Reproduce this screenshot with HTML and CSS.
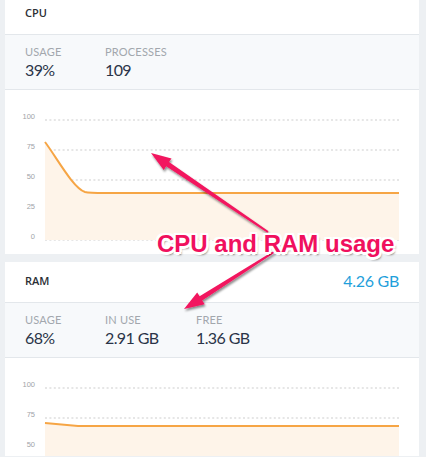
FILE: index.html
```html
<!DOCTYPE html>
<html>
<head>
<meta charset="utf-8">
<link rel="stylesheet" href="styles.css">
</head>
<body>
<div class="page">
  <section class="card card-first">
    <header class="card-head"><span class="card-title">CPU</span></header>
    <div class="stats">
      <div class="stat"><div class="stat-label">Usage</div><div class="stat-value">39%</div></div>
      <div class="stat"><div class="stat-label">Processes</div><div class="stat-value">109</div></div>
    </div>
    <div class="chart">
      <svg class="chart-svg" width="414" height="164" viewBox="0 0 414 164">
        <g class="grid">
          <line x1="40" y1="30" x2="394" y2="30"/>
          <line x1="40" y1="60" x2="394" y2="60"/>
          <line x1="40" y1="90" x2="394" y2="90"/>
          <line x1="40" y1="120" x2="394" y2="120"/>
          <line x1="40" y1="150" x2="394" y2="150"/>
        </g>
        <g class="axis">
          <text x="30" y="29">100</text>
          <text x="30" y="59">75</text>
          <text x="30" y="89">50</text>
          <text x="30" y="119">25</text>
          <text x="30" y="149">0</text>
        </g>
        <path class="area" d="M40 52 C52 68, 68 98, 80 102 C84 103, 88 103, 100 103 L394 103 L394 150 L40 150 Z"/>
        <path class="line" d="M40 52 C52 68, 68 98, 80 102 C84 103, 88 103, 100 103 L394 103"/>
      </svg>
    </div>
  </section>

  <section class="card">
    <header class="card-head"><span class="card-title">RAM</span><span class="card-total">4.26 GB</span></header>
    <div class="stats">
      <div class="stat"><div class="stat-label">Usage</div><div class="stat-value">68%</div></div>
      <div class="stat stat-wide"><div class="stat-label">In use</div><div class="stat-value">2.91 GB</div></div>
      <div class="stat"><div class="stat-label">Free</div><div class="stat-value">1.36 GB</div></div>
    </div>
    <div class="chart chart-cut">
      <svg class="chart-svg" width="414" height="98" viewBox="0 0 414 98">
        <g class="grid">
          <line x1="40" y1="30" x2="394" y2="30"/>
          <line x1="40" y1="60" x2="394" y2="60"/>
          <line x1="40" y1="90" x2="394" y2="90"/>
        </g>
        <g class="axis">
          <text x="30" y="29">100</text>
          <text x="30" y="59">75</text>
          <text x="30" y="89">50</text>
        </g>
        <path class="area" d="M40 65 L73 68 L394 68 L394 98 L40 98 Z"/>
        <path class="line" d="M40 65 L73 68 L394 68"/>
      </svg>
    </div>
  </section>

  <svg class="arrows" width="426" height="457" viewBox="0 0 426 457">
    <defs>
      <filter id="sh" x="-20%" y="-20%" width="140%" height="140%">
        <feDropShadow dx="1" dy="2" stdDeviation="1" flood-color="#000" flood-opacity="0.45"/>
      </filter>
    </defs>
    <polygon class="arrow" points="268.6,231.2 169,162.1 171.5,158.4 151,153 163.7,170 166.2,166.3 267.4,232.8"/>
    <polygon class="arrow" points="277.5,250.8 202.2,300.4 204.7,304.2 184,309 197.2,292.4 199.6,296.2 276.5,249.2"/>
  </svg>
  <div class="callout">CPU and RAM usage</div>
</div>
</body>
</html>
```

FILE: styles.css
```css
* { box-sizing: border-box; }
html, body { margin: 0; padding: 0; }
body {
  background: #edf0f3;
  font-family: Lato, "Open Sans", sans-serif;
  overflow: hidden;
}
.page {
  position: relative;
  width: 426px;
  height: 457px;
  padding: 0 7px 0 5px;
  overflow: hidden;
}
.card {
  background: #fff;
  margin-bottom: 8px;
}
.card-first { margin-top: -6px; }
.card-head {
  height: 41px;
  display: flex;
  align-items: center;
  justify-content: space-between;
  padding: 0 20px 4px;
  border-bottom: 1px solid #e3e7eb;
}
.card-title {
  font-family: "Open Sans", sans-serif;
  font-size: 11px;
  font-weight: 600;
  color: #2b2f35;
}
.card-total {
  font-size: 16px;
  color: #1f9fdb;
  letter-spacing: -0.3px;
}
.stats {
  display: flex;
  background: #f7f9fb;
  border-bottom: 1px solid #e3e7eb;
  padding: 10px 20px 9px;
  height: 55px;
}
.stat { width: 80px; }
.stat-wide { width: 91px; }
.stat-label {
  font-size: 11px;
  line-height: 13px;
  text-transform: uppercase;
  color: #a2a7ad;
  letter-spacing: 0.2px;
}
.stat-value {
  font-size: 16px;
  line-height: 20px;
  margin-top: 2px;
  color: #2a3448;
  letter-spacing: -0.6px;
}
.chart { height: 164px; }
.chart-cut { height: 98px; }
.chart-svg { display: block; }
.grid line {
  stroke: #e6e6e6;
  stroke-width: 2;
  stroke-dasharray: 2 2.4;
}
.axis text {
  font-family: "Liberation Sans", sans-serif;
  font-size: 7.5px;
  fill: #a0a4a8;
  text-anchor: end;
}
.area { fill: #fef4e9; }
.line { fill: none; stroke: #f6a545; stroke-width: 2; }
.arrows {
  position: absolute;
  left: 0;
  top: 0;
  pointer-events: none;
}
.arrow { fill: #f2165e; filter: url(#sh); }
.callout {
  position: absolute;
  left: 157px;
  top: 232px;
  font-family: "Liberation Sans", Arial, sans-serif;
  font-weight: bold;
  font-size: 24px;
  line-height: 24px;
  color: #f0105e;
  white-space: nowrap;
  text-shadow:
    -2.5px 0 0 #fff, 2.5px 0 0 #fff, 0 -2.5px 0 #fff, 0 2.5px 0 #fff,
    -2px -2px 0 #fff, 2px -2px 0 #fff, -2px 2px 0 #fff, 2px 2px 0 #fff,
    2px 3px 2px rgba(0,0,0,0.5);
}
```
